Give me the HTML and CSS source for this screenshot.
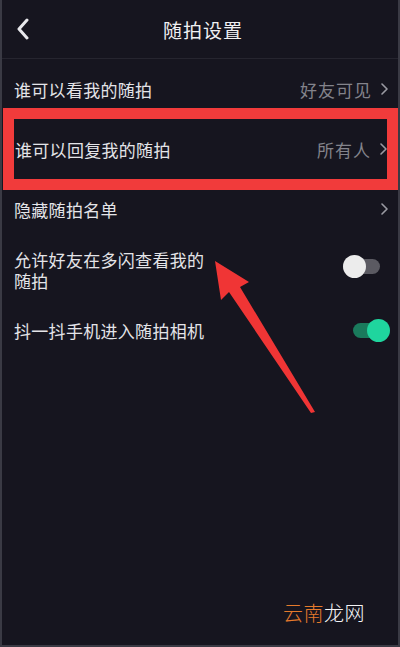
FILE: index.html
```html
<!DOCTYPE html>
<html lang="zh-CN">
<head>
    <meta charset="UTF-8">
    <meta name="viewport" content="width=device-width, initial-scale=1.0">
    <title>随拍设置</title>
    <link rel="stylesheet" href="styles.css">
</head>
<body>
    <div class="screen">
        <div class="header">
            <svg class="back" width="14" height="22" viewBox="0 0 14 22">
                <polyline points="11,2 3,11 11,20" />
            </svg>
            <h1>随拍设置</h1>
        </div>

        <div class="row">
            <span class="label">谁可以看我的随拍</span>
            <span class="value">好友可见</span>
            <svg class="arrow" width="8" height="12" viewBox="0 0 8 12"><polyline points="2,1 7,6 2,11" /></svg>
        </div>

        <div class="row highlight">
            <span class="label">谁可以回复我的随拍</span>
            <span class="value">所有人</span>
            <svg class="arrow" width="8" height="12" viewBox="0 0 8 12"><polyline points="2,1 7,6 2,11" /></svg>
        </div>

        <div class="row">
            <span class="label">隐藏随拍名单</span>
            <svg class="arrow" width="8" height="12" viewBox="0 0 8 12"><polyline points="2,1 7,6 2,11" /></svg>
        </div>

        <div class="row tall">
            <span class="label wrap">允许好友在多闪查看我的<br>随拍</span>
            <div class="switch off"><div class="knob"></div></div>
        </div>

        <div class="row short">
            <span class="label">抖一抖手机进入随拍相机</span>
            <div class="switch on"><div class="knob"></div></div>
        </div>

        <!-- annotation arrow -->
        <svg class="pointer" width="400" height="647" viewBox="0 0 400 647">
            <polygon points="215,261 249,282 240,287 315,412 311,413 229,292 221,300" />
        </svg>

        <div class="watermark"><span class="orange">云南</span>龙网</div>
    </div>
</body>
</html>
```

FILE: styles.css
```css
* {
    box-sizing: border-box;
}

body {
    margin: 0;
    background-color: #16151f;
    font-family: "Noto Sans CJK SC", "Noto Sans", sans-serif;
    color: #e4e4e8;
}

.screen {
    position: relative;
    width: 400px;
    height: 647px;
    overflow: hidden;
    border-left: 2px solid #3a3a44;
    border-right: 2px solid #3a3a44;
    border-bottom: 2px solid #3a3a44;
}

.header {
    display: flex;
    align-items: center;
    justify-content: center;
    height: 59px;
    border-bottom: 1px solid #26252f;
    position: relative;
}

.header h1 {
    margin: 0 0 0 6px;
    font-size: 19px;
    font-weight: normal;
    letter-spacing: 1px;
    color: #f0f0f2;
}

.back {
    position: absolute;
    left: 14px;
    top: 18px;
}

.back polyline {
    fill: none;
    stroke: #e8e8ec;
    stroke-width: 3;
    stroke-linecap: round;
    stroke-linejoin: round;
}

.row {
    display: flex;
    align-items: center;
    height: 60px;
    padding: 0 10px 0 12px;
    font-size: 17px;
}

.row .label {
    flex: 1;
    letter-spacing: 0.3px;
}

.row .label.wrap {
    font-family: "Liberation Sans", "Noto Sans CJK SC", sans-serif;
    line-height: 21px;
}

.row .value {
    color: #83838b;
    margin-right: 8px;
    letter-spacing: 1px;
}

.arrow polyline {
    fill: none;
    stroke: #9a9aa2;
    stroke-width: 1.6;
    stroke-linecap: round;
    stroke-linejoin: round;
}

.row.highlight {
    margin: 0 11px 0 12px;
    padding: 0 0 0 1px;
    outline: 11px solid #f13b3b;
}

.row.tall {
    height: 68px;
    align-items: flex-start;
    padding-top: 12px;
}

.row.short {
    height: 46px;
}

.switch {
    position: relative;
    width: 37px;
    height: 15px;
    border-radius: 8px;
    margin-right: 8px;
}

.switch.off {
    background-color: #5b5a62;
    margin-top: 8px;
}

.switch.on {
    background-color: #1a7a5c;
    width: 28px;
    margin-right: 7px;
}

.knob {
    position: absolute;
    top: -4px;
    width: 23px;
    height: 23px;
    border-radius: 50%;
}

.switch.off .knob {
    left: 0;
    background-color: #ececec;
}

.switch.on .knob {
    right: -9px;
    background-color: #1fd59e;
}

.pointer {
    position: absolute;
    left: -2px;
    top: 0;
}

.pointer polygon {
    fill: #f03535;
}

.watermark {
    position: absolute;
    left: 281px;
    top: 598px;
    font-size: 20px;
    font-weight: 300;
    color: #f4f4f6;
    letter-spacing: 0.5px;
}

.watermark .orange {
    color: #e57a2c;
}
```
